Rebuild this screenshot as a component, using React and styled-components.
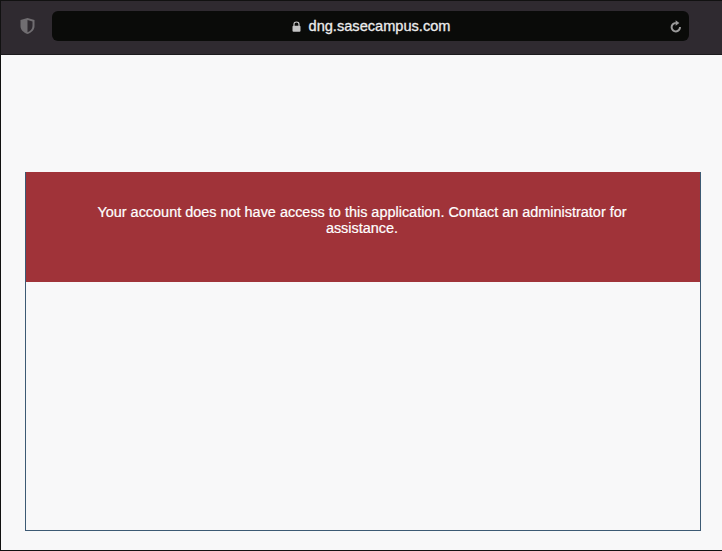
import React from 'react';
import styled, { createGlobalStyle } from 'styled-components';

const GlobalStyle = createGlobalStyle`
  html, body {
    margin: 0;
    padding: 0;
    background: #f8f8f9;
  }
  * {
    box-sizing: border-box;
  }
`;

const Frame = styled.div`
  width: 722px;
  height: 551px;
  display: flex;
  flex-direction: column;
  background: #f8f8f9;
  border: 1px solid #111;
  border-right: none;
  font-family: "Liberation Sans", Arial, sans-serif;
  overflow: hidden;
`;

const Toolbar = styled.div`
  height: 54px;
  flex-shrink: 0;
  display: flex;
  align-items: flex-start;
  gap: 15px;
  padding: 10px 33px 0 17px;
  background: #2f2a30;
  border-bottom: 1px solid #1c1a1d;
`;

const ShieldButton = styled.div`
  width: 19px;
  height: 30px;
  flex-shrink: 0;
  display: flex;
  align-items: center;
  justify-content: center;
`;

const AddressBar = styled.div`
  position: relative;
  flex: 1;
  height: 30px;
  display: flex;
  align-items: center;
  justify-content: center;
  gap: 8px;
  padding-left: 1px;
  background: #0a0b09;
  border-radius: 6px;
  color: #ececec;
  font-size: 14.6px;
  -webkit-text-stroke: 0.3px #ececec;
`;

const ReloadIcon = styled.svg`
  position: absolute;
  right: 7px;
  top: 9px;
`;

const Page = styled.div`
  flex: 1;
  padding: 117px 21px 19px 24px;
  display: flex;
`;

const Panel = styled.div`
  flex: 1;
  border: 1px solid #3d5a74;
  border-top: none;
`;

const Alert = styled.div`
  height: 110px;
  padding: 32px 52px 0 50px;
  background: #a03339;
  color: #fff;
  font-size: 14.44px;
  line-height: 16px;
  text-align: center;
  -webkit-text-stroke: 0.2px #fff;
`;

export default function App() {
  return (
    <>
      <GlobalStyle />
      <Frame>
        <Toolbar>
          <ShieldButton>
            <svg width="17" height="18" viewBox="0 0 16 18">
              <path d="M8 1 L15 3 V9 C15 13 12 15.5 8 17 C4 15.5 1 13 1 9 V3 Z" fill="#706d71" />
              <path d="M8 3 L13 4.4 V9 C13 12 11 14 8 15.2 Z" fill="#2f2a30" />
            </svg>
          </ShieldButton>
          <AddressBar>
            <svg width="9" height="11" viewBox="0 0 9 11">
              <path d="M2 5 V3.2 C2 1.8 3 1 4.5 1 C6 1 7 1.8 7 3.2 V5" fill="none" stroke="#c4c4c4" strokeWidth="1.2" />
              <rect x="0.5" y="4.8" width="8" height="6" rx="1" fill="#c4c4c4" />
            </svg>
            <span>dng.sasecampus.com</span>
            <ReloadIcon width="12" height="13" viewBox="0 0 12 13">
              <path d="M10 7 A4.2 4.2 0 1 1 5.8 3" fill="none" stroke="#9a9a9a" strokeWidth="2" />
              <path d="M5.6 0.2 L9.4 3 L5.6 5.8 Z" fill="#9a9a9a" />
            </ReloadIcon>
          </AddressBar>
        </Toolbar>
        <Page>
          <Panel>
            <Alert>
              Your account does not have access to this application. Contact an administrator for assistance.
            </Alert>
          </Panel>
        </Page>
      </Frame>
    </>
  );
}
